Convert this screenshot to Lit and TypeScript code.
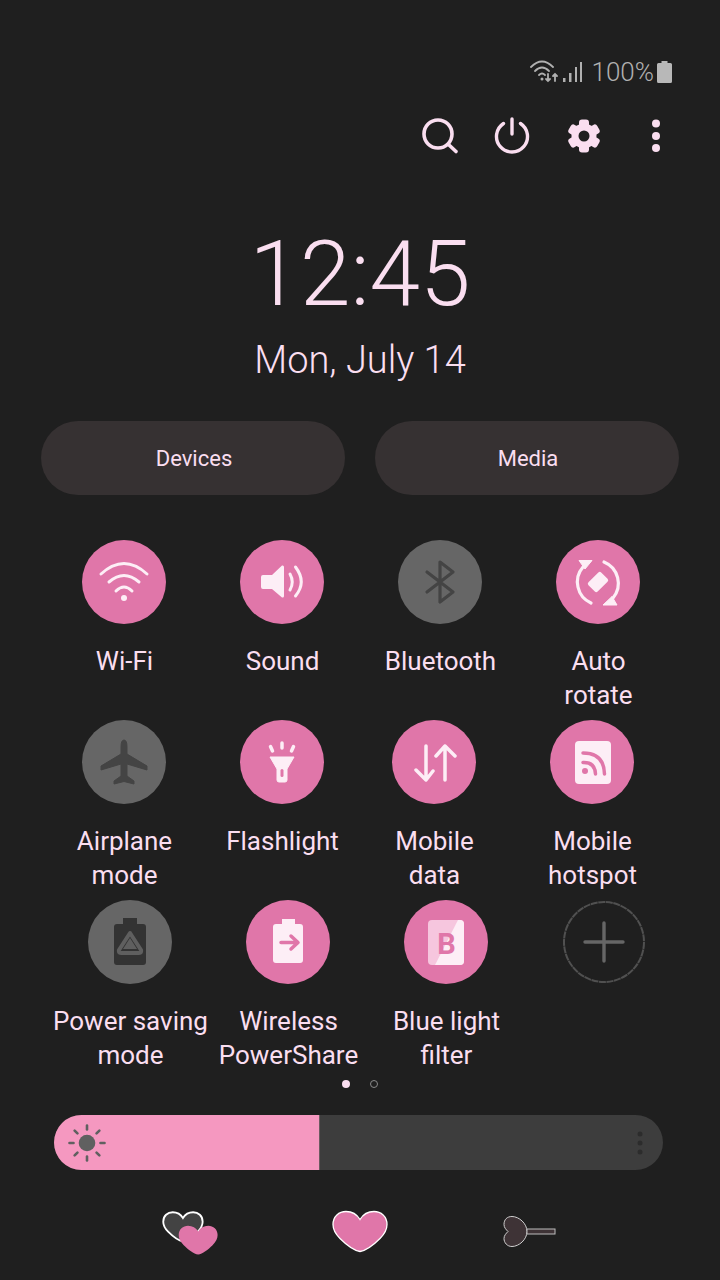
import { LitElement, html, css, svg } from "lit";
import { customElement } from "lit/decorators.js";

const W = "#fdeef6";
const P = "#e076a9";
const D = "#444444";

const icons: Record<string, unknown> = {
  wifi: svg`<g fill="none" stroke="${W}" stroke-width="3" stroke-linecap="round"><path d="M19 34Q42 13 65 34"/><path d="M27 42Q42 29 57 42"/><path d="M34 51Q42 43 50 51"/></g><circle cx="42" cy="58" r="3" fill="${W}"/>`,
  sound: svg`<path d="M23 35H32L42 25.5Q44 25 44 27V56Q44 58 42 57.5L32 49H23Q21 49 21 47V37Q21 35 23 35Z" fill="${W}"/><g fill="none" stroke="${W}" stroke-width="3" stroke-linecap="round"><path d="M50 34Q54.5 42 50 50"/><path d="M55.5 27Q67 42 55.5 56"/></g>`,
  bt: svg`<path d="M29 32L55 52L42 62V22L55 32L29 52" fill="none" stroke="${D}" stroke-width="3.2" stroke-linecap="round" stroke-linejoin="round"/>`,
  rotate: svg`<g fill="none" stroke="${W}" stroke-width="3.2" stroke-linecap="round"><path d="M27 27A23 23 0 0 0 35 63"/><path d="M48 22A23 23 0 0 1 57 58"/></g><path d="M23 20.5H36L29 29Z M47 65H61L56 56.5Z" fill="${W}" stroke="${W}" stroke-linejoin="round"/><rect x="33" y="35.5" width="18" height="13" rx="2" fill="${W}" transform="rotate(-45 42 42)"/>`,
  plane: svg`<path d="M42 20Q45 20 45 27V34L65 46V50L45 44V56L52 61V64L42 61.5L32 64V61L39 56V44L19 50V46L39 34V27Q39 20 42 20Z" fill="${D}" stroke="${D}" stroke-linejoin="round"/>`,
  flash: svg`<path d="M30 37H54L47 49V60Q47 62 45 62H39Q37 62 37 60V49Z" fill="${W}" stroke="${W}" stroke-linejoin="round"/><rect x="40.5" y="49" width="3" height="8" rx="1.5" fill="${P}"/><g stroke="${W}" stroke-width="3.5" stroke-linecap="round"><path d="M42 23V28"/><path d="M30.5 26.5L32.5 31"/><path d="M53.5 26.5L51.5 31"/></g>`,
  data: svg`<g fill="none" stroke="${W}" stroke-width="3.5" stroke-linecap="round" stroke-linejoin="round"><path d="M34 26V60M24 50L34 60L41 51"/><path d="M53 26V60M44 36L53 26L63 36"/></g>`,
  hotspot: svg`<rect x="25" y="21" width="36" height="43" rx="4" fill="${W}"/><circle cx="35" cy="51" r="3" fill="${P}"/><g fill="none" stroke="${P}" stroke-width="3.5" stroke-linecap="round"><path d="M33 42.5Q45 42 45.5 54"/><path d="M33 33Q54 33 54.5 54"/></g>`,
  saving: svg`<path d="M35 18H49V24H55Q58 24 58 27V62Q58 65 55 65H29Q26 65 26 62V27Q26 24 29 24H35Z" fill="#333333"/><path d="M42 33L53 50Q54 53 51 53H33Q30 53 31 50Z" fill="none" stroke="#5f5f5f" stroke-width="4" stroke-linejoin="round"/><path d="M42 38L49 49H35Z" fill="#5f5f5f"/>`,
  share: svg`<path d="M36 19H49V24H54Q57 24 57 27V60Q57 63 54 63H30Q27 63 27 60V27Q27 24 30 24H36Z" fill="${W}"/><path d="M35 42.5H51M45 36L52 42.5L45 49" fill="none" stroke="${P}" stroke-width="3.5" stroke-linecap="round" stroke-linejoin="round"/>`,
  blue: svg`<rect x="24" y="20" width="36" height="45" rx="4" fill="#f6c6de"/><path d="M54 20H56Q60 20 60 24V61Q60 65 56 65H31Z" fill="${W}"/>`,
  add: svg`<circle cx="42" cy="42" r="40" fill="none" stroke="#505050" stroke-width="2" stroke-dasharray="7 .6"/><path d="M23 42H61M42 23V61" stroke="#666666" stroke-width="3.4" stroke-linecap="round"/>`,
};

type Tile = { icon: string; lines: string[]; state: string; cls?: string };

const rows: { cls: string; tiles: Tile[] }[] = [
  {
    cls: "row-a",
    tiles: [
      { icon: "wifi", lines: ["Wi-Fi"], state: "on" },
      { icon: "sound", lines: ["Sound"], state: "on" },
      { icon: "bt", lines: ["Bluetooth"], state: "off" },
      { icon: "rotate", lines: ["Auto", "rotate"], state: "on" },
    ],
  },
  {
    cls: "row-a",
    tiles: [
      { icon: "plane", lines: ["Airplane", "mode"], state: "off" },
      { icon: "flash", lines: ["Flashlight"], state: "on" },
      { icon: "data", lines: ["Mobile", "data"], state: "on", cls: "nudge" },
      { icon: "hotspot", lines: ["Mobile", "hotspot"], state: "on" },
    ],
  },
  {
    cls: "row-c",
    tiles: [
      { icon: "saving", lines: ["Power saving", "mode"], state: "off" },
      { icon: "share", lines: ["Wireless", "PowerShare"], state: "on" },
      { icon: "blue", lines: ["Blue light", "filter"], state: "on" },
      { icon: "add", lines: [], state: "none" },
    ],
  },
];

const heart = "M28 41C22 40 14 34 8 28C3 23 1 19 1 14C1 6 7 1 14 1C20 1 25 4 28 9C31 4 36 1 42 1C49 1 55 6 55 14C55 19 53 23 48 28C42 34 34 40 28 41Z";

@customElement("app-root")
export class AppRoot extends LitElement {
  static styles = css`
    :host {
      display: block;
      width: 720px;
      height: 1280px;
      overflow: hidden;
      background: #1f1f1f;
      color: #fadef0;
      font-family: Roboto, "Liberation Sans", sans-serif;
    }
    .status {
      display: flex;
      justify-content: flex-end;
      align-items: center;
      height: 24px;
      padding: 60px 48px 0 0;
      color: #b0b0b0;
      font-size: 26px;
      font-weight: 300;
    }
    .status svg { display: block; }
    .pct { margin: 0 3px 0 9px; }
    .signal { margin-left: 2px; }
    .actions {
      display: flex;
      justify-content: flex-end;
      gap: 32px;
      padding: 32px 44px 0 0;
    }
    .actions svg { display: block; width: 40px; height: 40px; }
    .clock {
      margin-top: 65px;
      text-align: center;
      font-size: 91px;
      font-weight: 300;
      line-height: 106px;
    }
    .date {
      text-align: center;
      font-size: 38px;
      font-weight: 300;
      line-height: 44px;
      margin-top: 11px;
    }
    .pills {
      display: flex;
      gap: 30px;
      padding: 39px 41px 0;
    }
    .pill {
      flex: 1;
      height: 74px;
      border-radius: 37px;
      background: #363132;
      display: flex;
      align-items: center;
      justify-content: center;
      font-size: 22px;
      padding-left: 2px;
    }
    .grid { padding-top: 45px; height: 585px; box-sizing: border-box; }
    .row { display: flex; gap: 4px; height: 180px; }
    .row-a { padding-left: 47px; }
    .row-c { padding-left: 53px; }
    .tile {
      width: 154px;
      flex: none;
      overflow: hidden;
      display: flex;
      flex-direction: column;
      align-items: center;
      white-space: nowrap;
    }
    .nudge { margin-left: -6px; }
    .disc {
      width: 84px;
      height: 84px;
      border-radius: 50%;
      flex: none;
    }
    .disc svg { display: block; }
    .disc.on { background: #e076a9; }
    .disc.off { background: #666666; }
    .label {
      margin-top: 20px;
      padding-left: 1px;
      font-size: 26px;
      line-height: 34px;
      text-align: center;
    }
    .blue-b {
      font-family: Roboto, sans-serif;
      font-weight: 700;
      font-size: 29px;
      fill: #e076a9;
    }
    .dots {
      display: flex;
      justify-content: center;
      gap: 20px;
      height: 8px;
    }
    .dot { width: 8px; height: 8px; border-radius: 50%; box-sizing: border-box; }
    .dot.cur { background: #fadef0; }
    .dot.other { border: 1.5px solid #8a8a8a; }
    .bar {
      margin: 27px 57px 0 54px;
      height: 55px;
      border-radius: 28px;
      background: #3d3d3d;
      overflow: hidden;
      display: flex;
      align-items: center;
      justify-content: space-between;
    }
    .fill {
      width: 266px;
      height: 100%;
      background: #f598c0;
      display: flex;
      align-items: center;
      padding-left: 11px;
      box-sizing: border-box;
      border-right: 1px solid #6a5a60;
    }
    .fill svg { display: block; }
    .grip { display: block; margin-right: 20px; }
    .bottom {
      display: flex;
      padding: 40px 0 0 160px;
      align-items: flex-start;
    }
    .bottom svg { display: block; flex: none; }
    .mid { margin-left: 110px; }
    .right { margin-left: 113px; }
  `;

  private tile(t: Tile) {
    return html`<div class="tile ${t.cls ?? ""}">
      <div class="disc ${t.state}">
        <svg width="84" height="84" viewBox="0 0 84 84">
          ${icons[t.icon]}
          ${t.icon === "blue" ? svg`<text class="blue-b" x="42.5" y="53.5" text-anchor="middle">B</text>` : ""}
        </svg>
      </div>
      ${t.lines.length
        ? html`<div class="label">${t.lines.map((l) => html`<div>${l}</div>`)}</div>`
        : ""}
    </div>`;
  }

  render() {
    const rays = [0, 45, 90, 135, 180, 225, 270, 315];
    return html`
      <div class="status">
        <svg width="32" height="24" viewBox="0 0 32 24">
          <g fill="none" stroke="#b0b0b0" stroke-width="1.8" stroke-linecap="round">
            <path d="M2 7Q13 -4 24 7"/><path d="M6 11Q13 4 20 11"/><path d="M10 15Q13 12 16 15"/>
            <path d="M19 14V21M17 19L19 21L21 19"/><path d="M26 21V14M24 16L26 14L28 16"/>
          </g>
          <circle cx="13" cy="19" r="1.5" fill="#b0b0b0"/>
        </svg>
        <svg class="signal" width="20" height="24" viewBox="0 0 20 24">
          <g fill="#b0b0b0">
            <rect x="0" y="18" width="2.5" height="4"/><rect x="6" y="13" width="2.5" height="9"/>
            <rect x="12" y="7" width="2" height="15"/><rect x="17" y="2" width="2" height="20"/>
          </g>
        </svg>
        <span class="pct">100%</span>
        <svg width="15" height="24" viewBox="0 0 15 24">
          <path d="M4.5 1H10.5V3H13.5Q15 3 15 4.5V21.5Q15 23 13.5 23H1.5Q0 23 0 21.5V4.5Q0 3 1.5 3H4.5Z" fill="#b8b8b8"/>
        </svg>
      </div>

      <div class="actions">
        <svg viewBox="0 0 40 40">
          <circle cx="18" cy="18" r="14" fill="none" stroke="#fadef0" stroke-width="3.6"/>
          <path d="M28.5 28.5L36 35.5" stroke="#fadef0" stroke-width="3.6" stroke-linecap="round"/>
        </svg>
        <svg viewBox="0 0 40 40">
          <path d="M11.5 7.5A15.5 15.5 0 1 0 28.5 7.5" fill="none" stroke="#fadef0" stroke-width="3.4" stroke-linecap="round"/>
          <path d="M20 3V18" stroke="#fadef0" stroke-width="3.4" stroke-linecap="round"/>
        </svg>
        <svg viewBox="0 0 40 40" fill="#fadef0">
          <circle cx="20" cy="20" r="12.5"/>
          <rect x="15" y="3.5" width="10" height="33" rx="3"/>
          <rect x="15" y="3.5" width="10" height="33" rx="3" transform="rotate(60 20 20)"/>
          <rect x="15" y="3.5" width="10" height="33" rx="3" transform="rotate(120 20 20)"/>
          <circle cx="20" cy="20" r="5.5" fill="#1f1f1f"/>
        </svg>
        <svg viewBox="0 0 40 40" fill="#fadef0">
          <circle cx="20" cy="7.5" r="4"/><circle cx="20" cy="20" r="4"/><circle cx="20" cy="32" r="4"/>
        </svg>
      </div>

      <div class="clock">12:45</div>
      <div class="date">Mon, July 14</div>

      <div class="pills">
        <div class="pill">Devices</div>
        <div class="pill">Media</div>
      </div>

      <div class="grid">
        ${rows.map(
          (r) => html`<div class="row ${r.cls}">${r.tiles.map((t) => this.tile(t))}</div>`
        )}
      </div>

      <div class="dots"><span class="dot cur"></span><span class="dot other"></span></div>

      <div class="bar">
        <div class="fill">
          <svg width="44" height="44" viewBox="0 0 44 44">
            <circle cx="22" cy="22" r="8.3" fill="#606060"/>
            ${rays.map(
              (a) => svg`<path d="M22 8.5V4.5" stroke="#606060" stroke-width="2.6" stroke-linecap="round" transform="rotate(${a} 22 22)"/>`
            )}
          </svg>
        </div>
        <svg class="grip" width="6" height="26" viewBox="0 0 6 26" fill="#2c2c2c">
          <circle cx="3" cy="4" r="2.5"/><circle cx="3" cy="13" r="2.5"/><circle cx="3" cy="22" r="2.5"/>
        </svg>
      </div>

      <div class="bottom">
        <svg width="60" height="48" viewBox="0 0 60 48">
          <path d="${heart}" transform="translate(2.5 1.5) scale(.73)" fill="#434343" stroke="#ffffff" stroke-width="2.5"/>
          <path d="${heart}" transform="translate(18 15) scale(.72)" fill="${P}"/>
        </svg>
        <svg class="mid" width="60" height="46" viewBox="0 0 60 46">
          <path d="${heart}" transform="translate(2 .5)" fill="${P}" stroke="#ffffff" stroke-width="1.3"/>
        </svg>
        <svg class="right" width="56" height="40" viewBox="0 0 56 40">
          <path d="M24 21.5C24 29.5 16 36.5 9 36.5C4 36.5 1 32.5 1 28.5C1 25.5 3 23.5 5 21.5C3 19.5 1 17.5 1 14.5C1 9.5 4 6.5 9 6.5C16 6.5 24 13.5 24 21.5Z" fill="#3e3336" stroke="#cfcfcf" stroke-width="1"/>
          <rect x="24" y="19" width="28" height="5" fill="#3e3336" stroke="#bdbdbd" stroke-width="1"/>
        </svg>
      </div>
    `;
  }
}
